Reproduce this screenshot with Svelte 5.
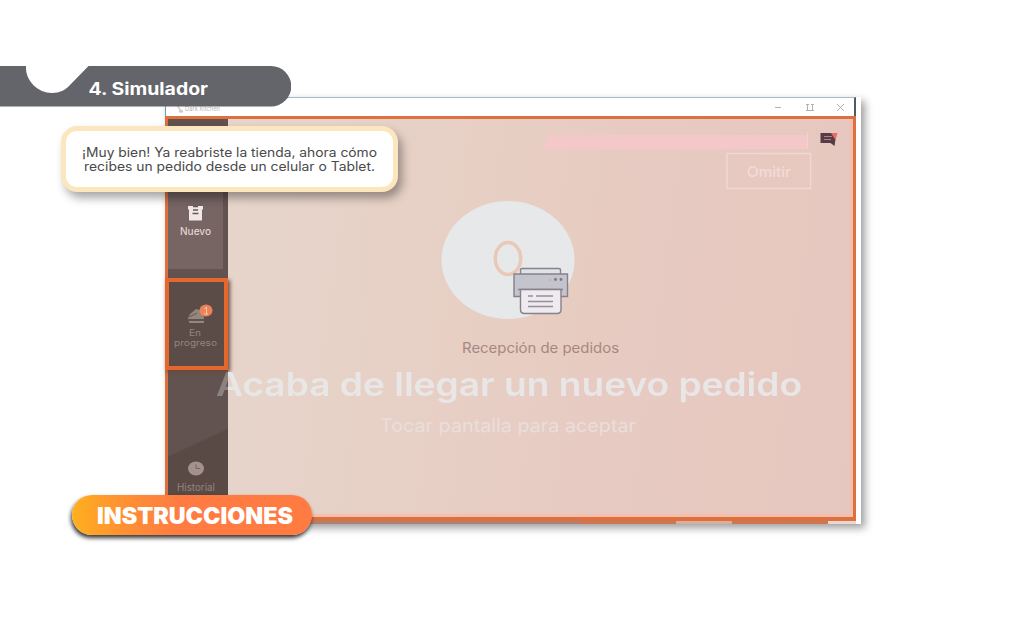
<script>
  const nav = ['Nuevo', 'En progreso', 'Historial'];
</script>

{#snippet line(text, width, height, base, size, weight, fill)}
  <svg {width} {height} class="line" aria-label={text}>
    <text x="0" y={base} textLength={width} lengthAdjust="spacingAndGlyphs" font-size={size} font-weight={weight} {fill}>{text}</text>
  </svg>
{/snippet}

<div class="page">
  <section class="window">
    <header class="titlebar">
      <svg width="60" height="19" class="app-name">
        <path d="M11 7q3 5 5 7" stroke="#f0cdb9" stroke-width="2" fill="none" />
        <path d="M13 13.500h4" stroke="#b9d1d4" stroke-width="2" />
        <text x="19" y="12.5" textLength="35" lengthAdjust="spacingAndGlyphs" font-size="6.500" fill="#b9b5b5">Dark Kitchen</text>
      </svg>
      <svg width="90" height="19" fill="none" stroke="#b0b0b0">
        <path d="M10 9.500h6M41 6.500h3M46 6.500h3M42.500 6v7M47.500 6v7M41 12.500h8M72 6l7 7M79 6l-7 7" />
      </svg>
    </header>
    <div class="body">
      <nav class="sidebar">
        <div class="item new">
          <svg width="15" height="16" viewBox="0 0 15 16">
            <path d="M0 1h15v3.500h-1V15.500H1V4.500H0z" fill="#f1e8e5" />
            <path d="M5 1.500h5M5 5h5M4.500 8.500h6" stroke="#6a5854" stroke-width="1.300" />
          </svg>
          {@render line(nav[0], 31, 15, 10, 10, 500, '#e0d5d1')}
        </div>
        <div class="item active">
          <svg width="26" height="23" viewBox="0 0 26 23">
            <path d="M1 15L3 11 9 6l4 1 4 7v2H1zM2 18h15v2H2z" fill="#94857f" />
            <path d="M2 14l8-4M1 17h16" stroke="#675651" />
            <ellipse cx="19" cy="7.500" rx="6.500" ry="6" fill="#ea8458" />
            <path d="M17.500 6l2-2v7M17 11h4" stroke="#ffc3a5" fill="none" />
          </svg>
          {@render line('En', 12, 9, 8, 9, 400, '#93857f')}
          {@render line('progreso', 43, 12, 8, 9, 400, '#93857f')}
        </div>
        <div class="item history">
          <svg width="16" height="15" viewBox="0 0 16 15">
            <ellipse cx="8" cy="7.500" rx="8" ry="7" fill="#a3928c" />
            <path d="M8 3.500v4h4" fill="none" stroke="#75615b" />
          </svg>
          {@render line(nav[2], 38, 14, 8.5, 10, 400, '#94847e')}
        </div>
      </nav>
      <main class="screen"></main>
      <svg class="art" width="691" height="407" viewBox="165 115 691 407">
        <ellipse cx="507" cy="253" rx="149" ry="134" fill="#ebcdc2" opacity=".13" />
        <ellipse cx="508" cy="260" rx="66.500" ry="59" fill="#e6e8e9" />
        <ellipse cx="508" cy="258.500" rx="12.700" ry="16" fill="none" stroke="#eac8b8" stroke-width="3.500" />
        <g stroke="#85818d" stroke-width="1.400">
          <path d="M520.500 274v-4q0-1.500 2-1.500h36q2 0 2 1.500v4" fill="#e2e1e5" />
          <path d="M514 274h53.500v22.500H514z" fill="#c4c4cc" />
          <path d="M518 289.500h45" fill="none" />
          <path d="M520.500 289.500h40.500v20q0 4-4 4h-32.500q-4 0-4-4z" fill="#eeeaed" />
          <path d="M528 296h5M536 296h17M528 301.500h25M528 306.500h25" fill="none" stroke="#92909c" />
        </g>
        <circle cx="550" cy="280" r="1" fill="#d5a798" />
        <circle cx="555.500" cy="279.500" r="1.400" fill="#777786" /><circle cx="561" cy="279.500" r="1.400" fill="#777786" />
        <text x="462" y="353" textLength="157" lengthAdjust="spacingAndGlyphs" font-size="14" fill="#a78782">Recepción de pedidos</text>
        <text x="216" y="395.500" textLength="586" lengthAdjust="spacingAndGlyphs" font-size="32" font-weight="600" fill="#e8e8e8" fill-opacity=".94" mask="url(#fade)">Acaba de llegar un nuevo pedido</text>
        <text x="380" y="432" textLength="256" lengthAdjust="spacingAndGlyphs" font-size="18" fill="#eadedb">Tocar pantalla para aceptar</text>
        <mask id="fade" maskUnits="userSpaceOnUse" x="200" y="360" width="620" height="60">
          <path d="M200 360h28v60h-28z" fill="#555" /><path d="M228 360h592v60H228z" fill="#fff" />
        </mask>
        <path d="M546 135h261v14H546z" fill="#f4c8c8" />
        <path d="M807.500 132v17" stroke="#f0d3ce" />
        <path d="M727 153.500h83.500v35H727z" fill="none" stroke="#efd8d2" stroke-width="1.500" />
        <text x="747" y="176.500" textLength="44" lengthAdjust="spacingAndGlyphs" font-size="14.500" font-weight="500" fill="#f0dcd6">Omitir</text>
        <path d="M820.500 133h16l-2 13-4-3h-10z" fill="#573c43" />
        <path d="M831 133h6.500l-2 7z" fill="#e96e61" />
        <path d="M824 136.500h8M824 139.500h7" stroke="#a4868a" />
      </svg>
      <div class="selection"></div>
    </div>
    <div class="scraps"></div>
  </section>

  <div class="heading">
    <svg class="ribbon" width="291" height="41" viewBox="0 0 291 41">
      <path d="M0 0H26V2C26 15 38 27 52 27C60 27 65 24 69 20L88.500 0H271A20.200 20.200 0 0 1 271 40.500H0z" fill="#64656a" />
      <text x="88.500" y="28.500" textLength="119.500" lengthAdjust="spacingAndGlyphs" font-size="17" font-weight="700" fill="#fff">4. Simulador</text>
    </svg>
  </div>

  <div class="message">
    {@render line('¡Muy bien! Ya reabriste la tienda, ahora cómo', 295, 14, 10.5, 12.5, 400, '#4a4a4b')}
    {@render line('recibes un pedido desde un celular o Tablet.', 291, 14, 10.5, 12.5, 400, '#4a4a4b')}
  </div>

  <button class="instructions">
    {@render line('INSTRUCCIONES', 196, 24, 20.5, 22.5, 900, '#fff')}
  </button>
</div>

<style>
  :global(body) { background: #fff; }
  .page { position: relative; width: 1024px; height: 620px; overflow: hidden; font-family: Inter, "Open Sans", sans-serif; }
  .line { display: block; overflow: visible; flex: none; }
  .window { position: absolute; isolation: isolate; left: 165px; top: 97px; width: 696px; height: 427px; background: #fff; box-shadow: 4px 4px 8px rgba(0, 0, 0, .38); }
  .titlebar { display: flex; justify-content: space-between; width: 691px; height: 19px; box-sizing: border-box; border-top: 1px solid #a4bdc9; border-left: 1px solid #68a0b2; border-right: 2px solid #4d5a67; }
  .titlebar svg:last-child { margin-right: -1px; }
  .body { position: relative; display: flex; width: 691px; height: 405px; box-sizing: border-box; border: 3px solid #dd703d; border-bottom-width: 4px; }
  .sidebar { width: 60px; display: flex; flex-direction: column; background: linear-gradient(155deg, #625350 0 79%, #5a4a46 79.5%); flex: none; }
  .screen { flex: 1; background: linear-gradient(98deg, #e6d5cb 0, #e7d0c6 32%, #e7cac1 65%, #e6c7bf); box-shadow: inset -3px -3px 2px #f4beae; }
  .item { display: flex; flex-direction: column; align-items: center; box-sizing: border-box; }
  .new { height: 150px; width: 56px; padding-top: 86px; background: linear-gradient(#60504c, #766562 60%); border-right: 1px solid #65514e; }
  .new .line { margin-top: 4px; }
  .active { margin: 9px 0 0 -3px; width: 63px; height: 92px; padding-top: 21px; background: #5b4c48; border: 4px solid #e5672e; box-shadow: 2px 2px 4px #6d493b; position: relative; z-index: 1; }
  .active svg:first-child { margin-left: 6px; }
  .active .line { margin: 2px 3px 0 0; }
  .active .line + .line { margin-top: 1px; }
  .history { padding: 91px 5px 0 0; }
  .history .line { margin-top: 6px; }
  .art { position: absolute; left: -3px; top: -4px; z-index: 2; }
  .scraps { width: 691px; height: 3px; background: linear-gradient(90deg, #ad8073 0 60%, #cd7855 60% 74%, #d6ae9c 74% 82%, #cd7855 82% 96%, #ead7cf 96%); }
  .heading { position: absolute; left: 0; top: 66px; }
  .ribbon { display: block; }
  .message { position: absolute; left: 61px; top: 126px; width: 337px; height: 66px; box-sizing: border-box; padding-top: 15px; border: 5px solid #fce6bd; border-radius: 16px; background: #fff; box-shadow: 4px 6px 10px rgba(0, 0, 0, .35); display: flex; flex-direction: column; align-items: center; }
  .instructions { position: absolute; left: 72px; top: 495px; width: 240px; height: 40px; padding: 0 0 0 25px; border: 0; border-radius: 20px; display: flex; align-items: center; font-family: inherit; background: linear-gradient(90deg, #ffb01f, #ff9331 19%, #ff7b42 45%); box-shadow: -1px 3px 4px rgba(0, 0, 0, .8); }
</style>
